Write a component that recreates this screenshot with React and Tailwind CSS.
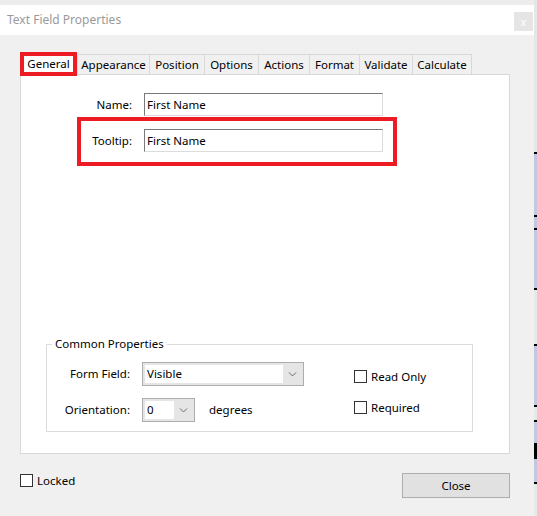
import React from "react";

const tabs = [
  { label: "Appearance", w: "w-[72px]" },
  { label: "Position", w: "w-[55px]" },
  { label: "Options", w: "w-[54px]" },
  { label: "Actions", w: "w-[51px]" },
  { label: "Format", w: "w-[50px]" },
  { label: "Validate", w: "w-[53px]" },
  { label: "Calculate", w: "w-[60px]" },
];

// strip of the document showing behind the dialog, right edge
const strip = [
  { h: "h-[152px]", c: "bg-[#e6e6e6]" },
  { h: "h-[2px]", c: "bg-black" },
  { h: "h-[61px]", c: "bg-[#c3c8e0]" },
  { h: "h-[2px]", c: "bg-black" },
  { h: "h-[11px]", c: "bg-[#c3c8e0]" },
  { h: "h-[2px]", c: "bg-black" },
  { h: "h-[58px]", c: "bg-[#c3c8e0]" },
  { h: "h-[2px]", c: "bg-black" },
  { h: "h-[54px]", c: "bg-[#e8e8e8]" },
  { h: "h-[2px]", c: "bg-black" },
  { h: "h-[59px]", c: "bg-[#c3c8e0]" },
  { h: "h-[2px]", c: "bg-black" },
  { h: "h-[13px]", c: "bg-[#e8e8e8]" },
  { h: "h-[2px]", c: "bg-black" },
  { h: "h-[21px]", c: "bg-[#c3c8e0]" },
  { h: "h-[16px]", c: "bg-black" },
  { h: "h-[23px]", c: "bg-[#c3c8e0]" },
  { h: "h-[2px]", c: "bg-black" },
  { h: "flex-1", c: "bg-[#e8e8e8]" },
];

function Chevron() {
  return (
    <svg width="9" height="5" viewBox="0 0 9 5">
      <path d="M1 0.5 L4.5 4 L8 0.5" fill="none" stroke="#6d6d6d" strokeWidth="1" />
    </svg>
  );
}

function Combo({ value, className }) {
  return (
    <div className={`flex h-[24px] border border-[#adadad] bg-[#e5e5e5] p-[2px] ${className}`}>
      <div className="flex flex-1 items-center bg-white pl-[2px]">{value}</div>
      <div className="flex w-[18px] items-center justify-center">
        <Chevron />
      </div>
    </div>
  );
}

function Check({ label }) {
  return (
    <div className="flex items-center gap-[4px]">
      <span className="h-[13px] w-[13px] border border-[#333] bg-white" />
      <span>{label}</span>
    </div>
  );
}

function TextInput({ value }) {
  return (
    <div className="flex h-[23px] w-[239px] items-center border border-t-[#7a7a7a] border-l-[#7a7a7a] border-r-[#dcdcdc] border-b-[#dcdcdc] bg-white pl-[2px]">
      {value}
    </div>
  );
}

export default function App() {
  return (
    <div className="flex h-[516px] w-[537px] font-['Noto_Sans',sans-serif] text-[11.5px] text-black">
      <div className="flex w-[534px] flex-col bg-[#ececec]">
        <div className="h-[5px]" />
        <div className="flex h-[30px] items-center justify-between bg-white pl-[7px] pr-[1px]">
          <span className="text-[12px] text-[#9a9a9a]">Text Field Properties</span>
          <div className="mt-[3px] flex h-[19px] w-[19px] items-center justify-center bg-[#e5e5e5] text-[10px] leading-none text-white">
            x
          </div>
        </div>

        <div className="flex flex-1 flex-col bg-[#f0f0f0] pl-[20px] pr-[24px] pt-[17px]">
          {/* tabs */}
          <div className="flex h-[22px] items-end">
            <div className="relative z-10 -mb-[2px] flex h-[24px] w-[57px] items-center justify-center border-[4px] border-[#ed1c24] bg-white">
              General
            </div>
            {tabs.map((t, i) => (
              <div
                key={t.label}
                className={`flex h-[20px] items-center justify-center border-t border-l border-[#d9d9d9] ${t.w} ${
                  i === tabs.length - 1 ? "border-r" : ""
                }`}
              >
                {t.label}
              </div>
            ))}
          </div>

          {/* panel */}
          <div className="flex h-[380px] flex-col border border-[#d9d9d9] bg-white pt-[18px] pb-[21px]">
            <div className="flex items-center gap-[12px]">
              <span className="w-[111px] text-right">Name:</span>
              <TextInput value="First Name" />
            </div>
            <div className="ml-[56px] mt-px flex w-[320px] items-center gap-[12px] border-[4px] border-[#ed1c24] pt-[8px] pb-[10px] pr-[10px]">
              <span className="w-[51px] text-right">Tooltip:</span>
              <TextInput value="First Name" />
            </div>

            <fieldset className="ml-[25px] mt-auto w-[427px] border border-[#dcdcdc] pt-[10px] pb-[9px]">
              <legend className="ml-[5px] px-[3px] leading-[16px]">Common Properties</legend>
              <div className="flex">
                <div className="flex flex-col gap-[12px]">
                  <div className="flex items-center gap-[12px]">
                    <span className="w-[83px] text-right">Form Field:</span>
                    <Combo value="Visible" className="w-[162px]" />
                  </div>
                  <div className="flex items-center gap-[12px]">
                    <span className="w-[83px] text-right">Orientation:</span>
                    <Combo value="0" className="w-[53px]" />
                    <span className="ml-[2px]">degrees</span>
                  </div>
                </div>
                <div className="ml-[50px] flex flex-col gap-[14px] pt-[6px]">
                  <Check label="Read Only" />
                  <Check label="Required" />
                </div>
              </div>
            </fieldset>
          </div>

          {/* footer */}
          <div className="mt-[19px] flex items-start justify-between">
            <div className="mt-[-1px]">
              <Check label="Locked" />
            </div>
            <button className="h-[25px] w-[108px] border border-[#adadad] bg-[#e1e1e1]">Close</button>
          </div>
        </div>
      </div>
      <div className="flex w-[3px] flex-col">
        {strip.map((s, i) => (
          <div key={i} className={`${s.h} ${s.c}`} />
        ))}
      </div>
    </div>
  );
}
